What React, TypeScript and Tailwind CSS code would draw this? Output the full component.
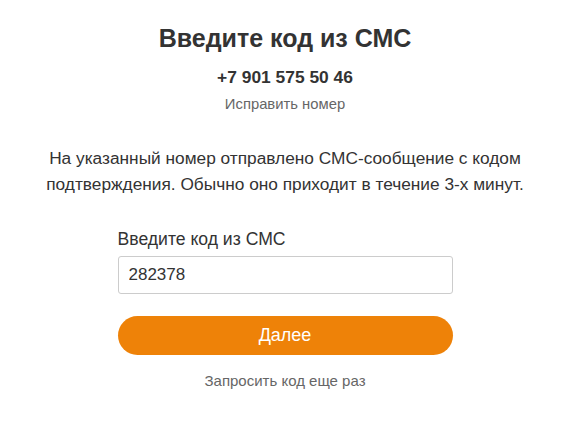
export default function App() {
  return (
    <main className="min-h-screen bg-white flex flex-col items-center text-[#333] font-['Liberation_Sans',Arial,sans-serif]">
      <h1 className="mt-[23px] text-[25px] leading-[30px] font-bold text-[#333]">Введите код из СМС</h1>
      <div className="mt-[13px] text-[17.4px] leading-[22px] font-bold">+7 901 575 50 46</div>
      <button type="button" className="mt-[6px] text-[14.8px] leading-[20px] text-[#666]">
        Исправить номер
      </button>

      <p className="mt-[31px] text-center text-[17.3px] leading-[26px] text-[#333]">
        На указанный номер отправлено СМС-сообщение с кодом
        <br />
        подтверждения. Обычно оно приходит в течение 3-х минут.
      </p>

      <form className="mt-[31px] w-[335px] flex flex-col" onSubmit={(e) => e.preventDefault()}>
        <label className="text-[17.6px] leading-[22px] text-[#333]">Введите код из СМС</label>
        <input
          type="text"
          defaultValue="282378"
          className="mt-[6px] h-[38px] w-full rounded-[3px] border border-[#ccc] px-[10px] text-[17px] text-[#333] focus:outline-none"
        />
        <button
          type="submit"
          className="mt-[22px] h-[39px] w-full rounded-full bg-[#ee8208] text-[18px] text-white"
        >
          Далее
        </button>
        <button type="button" className="mt-[16px] self-center text-[15px] leading-[20px] text-[#666]">
          Запросить код еще раз
        </button>
      </form>
    </main>
  );
}
